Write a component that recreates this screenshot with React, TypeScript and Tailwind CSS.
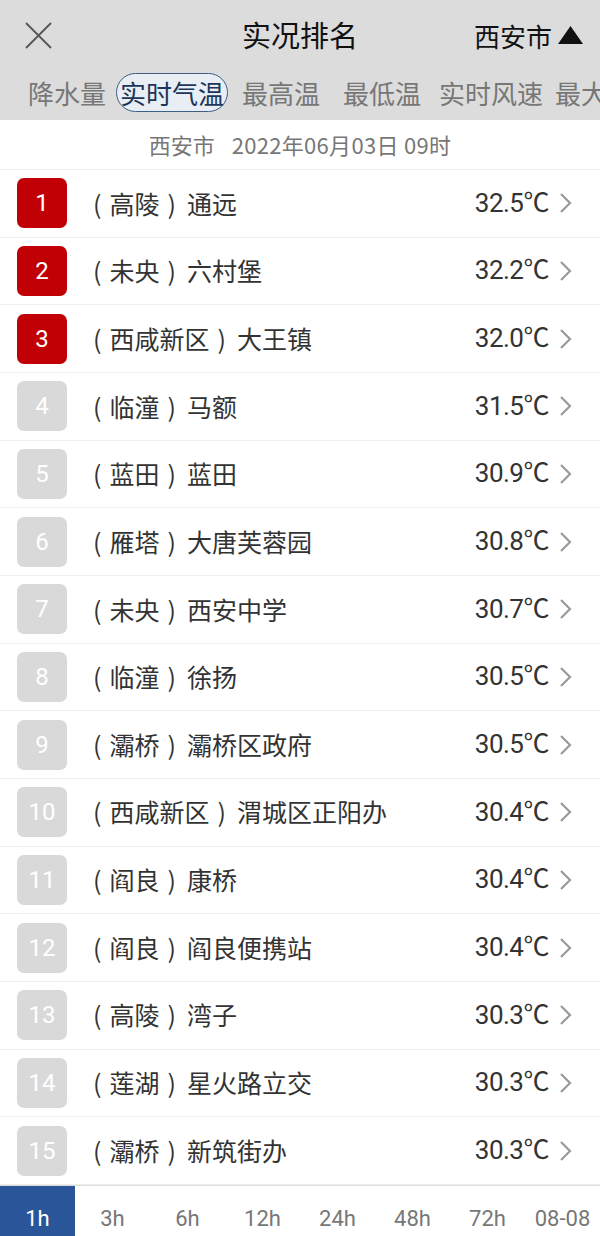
import React from 'react';

interface Station {
  rank: number;
  district: string;
  name: string;
  temp: string;
}

const stations: Station[] = [
  { rank: 1, district: '高陵', name: '通远', temp: '32.5' },
  { rank: 2, district: '未央', name: '六村堡', temp: '32.2' },
  { rank: 3, district: '西咸新区', name: '大王镇', temp: '32.0' },
  { rank: 4, district: '临潼', name: '马额', temp: '31.5' },
  { rank: 5, district: '蓝田', name: '蓝田', temp: '30.9' },
  { rank: 6, district: '雁塔', name: '大唐芙蓉园', temp: '30.8' },
  { rank: 7, district: '未央', name: '西安中学', temp: '30.7' },
  { rank: 8, district: '临潼', name: '徐扬', temp: '30.5' },
  { rank: 9, district: '灞桥', name: '灞桥区政府', temp: '30.5' },
  { rank: 10, district: '西咸新区', name: '渭城区正阳办', temp: '30.4' },
  { rank: 11, district: '阎良', name: '康桥', temp: '30.4' },
  { rank: 12, district: '阎良', name: '阎良便携站', temp: '30.4' },
  { rank: 13, district: '高陵', name: '湾子', temp: '30.3' },
  { rank: 14, district: '莲湖', name: '星火路立交', temp: '30.3' },
  { rank: 15, district: '灞桥', name: '新筑街办', temp: '30.3' },
];

const periods = ['1h', '3h', '6h', '12h', '24h', '48h', '72h', '08-08'];

const font = { fontFamily: '"Noto Sans CJK SC", "Noto Sans", sans-serif' };
const numFont = { fontFamily: 'Roboto, "Noto Sans CJK SC", sans-serif' };

const App: React.FC = () => {
  return (
    <div className="w-[600px] h-[1236px] bg-white flex flex-col overflow-hidden" style={font}>
      {/* Header */}
      <div className="bg-[#dcdcdc] shrink-0">
        <div className="h-[70px] flex items-center relative">
          <svg className="ml-[25px] w-[27px] h-[27px]" viewBox="0 0 27 27" fill="none" stroke="#555" strokeWidth={1.8}>
            <path d="M1 1L26 26M26 1L1 26" />
          </svg>
          <div className="absolute left-0 right-0 text-center text-[29px] text-[#111] pointer-events-none">实况排名</div>
          <div className="ml-auto mr-[16px] flex items-center text-[26px] text-[#111]">
            西安市
            <svg className="ml-[5px] w-[27px] h-[20px]" viewBox="0 0 27 20">
              <path d="M13.5 1L26 19H1Z" fill="#111" />
            </svg>
          </div>
        </div>
        <div className="h-[50px] flex items-start whitespace-nowrap text-[26px] text-[#777] leading-none pl-[28px] overflow-hidden">
          <span className="mt-[10px]">降水量</span>
          <span className="ml-[10px] mt-[3px] h-[39px] px-[3px] flex items-center rounded-full border-[1.5px] border-[#3d5f86] text-[#1b3658] bg-[#e9eef4]">实时气温</span>
          <span className="ml-[14px] mt-[10px]">最高温</span>
          <span className="ml-[23px] mt-[10px]">最低温</span>
          <span className="ml-[18px] mt-[10px]">实时风速</span>
          <span className="ml-[12px] mt-[10px]">最大风速</span>
        </div>
      </div>

      {/* Date line */}
      <div className="h-[50px] shrink-0 flex items-center justify-center text-[22px] text-[#777] border-b border-[#eeeeee]">
        <span>西安市</span>
        <span className="ml-[17px] tracking-[0.3px]">2022年06月03日 09时</span>
      </div>

      {/* List */}
      <div className="flex-1 flex flex-col">
        {stations.map(s => (
          <div key={s.rank} className="h-[67.67px] shrink-0 flex items-center border-b-[1.5px] border-[#eeeeee]">
            <div
              className={`ml-[17px] w-[50px] h-[50px] rounded-[7px] flex items-center justify-center text-[24px] text-white ${
                s.rank <= 3 ? 'bg-[#c10006]' : 'bg-[#d9d9d9]'
              }`}
              style={numFont}
            >
              {s.rank}
            </div>
            <div className="ml-[26px] flex items-center text-[25px] text-[#333] whitespace-nowrap">
              <span>(</span>
              <span className="ml-[8px]">{s.district}</span>
              <span className="ml-[8px]">)</span>
              <span className="ml-[11px]">{s.name}</span>
            </div>
            <div className="ml-auto text-[26px] text-[#333] tracking-[-0.5px]" style={numFont}>
              {s.temp}℃
            </div>
            <svg className="ml-[10px] mr-[28px] w-[13px] h-[22px]" viewBox="0 0 13 22" fill="none" stroke="#9a9a9a" strokeWidth={2.2}>
              <path d="M2 2L11 11L2 20" />
            </svg>
          </div>
        ))}
      </div>

      {/* Bottom period bar */}
      <div className="h-[51px] shrink-0 flex border-t border-[#dddddd]" style={numFont}>
        {periods.map((p, i) => (
          <div
            key={p}
            className={`w-[75px] flex items-end justify-center pb-[1px] text-[22px] ${
              i === 0 ? 'bg-[#2a5599] text-white' : 'text-[#777]'
            }`}
          >
            {p}
          </div>
        ))}
      </div>
    </div>
  );
};

export default App;
